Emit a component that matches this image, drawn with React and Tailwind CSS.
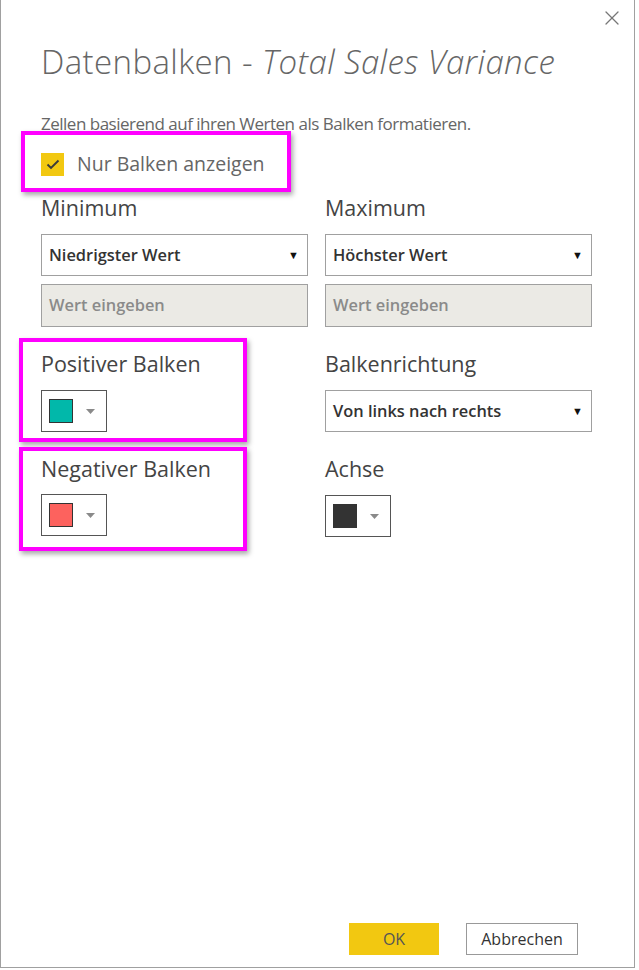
import { X } from 'lucide-react';

const font = { fontFamily: '"Open Sans", "Noto Sans", sans-serif' };

function Label({ children }) {
  return <div className="h-[26px] text-[21.5px] leading-[26px] text-[#444]">{children}</div>;
}

function Select({ value }) {
  return (
    <div className="h-[42px] border border-[#a0a0a0] bg-white flex items-center justify-between pl-[7px] pr-[8px]">
      <span className="text-[16.4px] font-semibold text-[#333]">{value}</span>
      <span className="text-[11px] text-[#111]">▼</span>
    </div>
  );
}

function ValueInput() {
  return (
    <div className="h-[43px] border border-[#a0a0a0] bg-[#ebeae5] flex items-center pl-[7px]">
      <span className="text-[16.4px] font-semibold text-[#8a8a8a]">Wert eingeben</span>
    </div>
  );
}

function Swatch({ color }) {
  return (
    <div className="w-[66px] h-[42px] border border-[#555] bg-white flex items-center pl-[7px] gap-[13px]">
      <div className={`w-[24px] h-[24px] border border-[#333] ${color}`} />
      <svg width="9" height="5" viewBox="0 0 9 5"><path d="M0 0h9L4.5 5z" fill="#8a8a8a" /></svg>
    </div>
  );
}

function Highlight({ className }) {
  return (
    <div
      className={`absolute border-[4px] border-[#ff00ff] pointer-events-none shadow-[2px_3px_5px_rgba(0,0,0,0.35)] ${className}`}
    />
  );
}

export default function App() {
  return (
    <div style={font} className="relative w-[635px] h-[968px] bg-white border-l border-r border-b border-[#a0a0a0] flex flex-col">
      <button type="button" className="absolute top-[6px] right-[10px] text-[#777]" aria-label="Close">
        <X size={24} strokeWidth={1.3} />
      </button>

      <div className="pl-[40px] pt-[40px]">
        <h1 className="text-[33px] leading-[44px] font-light text-[#666] tracking-[0.4px] whitespace-nowrap">
          Datenbalken - <span className="italic">Total Sales Variance</span>
        </h1>
        <p className="mt-[28px] text-[17px] leading-[24px] text-[#666] tracking-[-0.5px]">
          Zellen basierend auf ihren Werten als Balken formatieren.
        </p>

        <div className="relative mt-[16px] flex items-center gap-[13px] h-[24px]">
          <Highlight className="-left-[20px] -top-[21px] w-[270px] h-[61px]" />
          <div className="w-[23px] h-[23px] bg-[#f2c811] flex items-center justify-center">
            <svg width="14" height="11" viewBox="0 0 14 11">
              <path d="M1.5 5.5l3.5 3.5 7.5-7.5" fill="none" stroke="#3a3a3a" strokeWidth="1.9" />
            </svg>
          </div>
          <span className="text-[19.5px] text-[#666]">Nur Balken anzeigen</span>
        </div>

        <div className="grid grid-cols-[267px_267px] gap-x-[17px] mt-[19px]">
          <div>
            <Label>Minimum</Label>
            <div className="mt-[13px]"><Select value="Niedrigster Wert" /></div>
            <div className="mt-[8px]"><ValueInput /></div>
          </div>
          <div>
            <Label>Maximum</Label>
            <div className="mt-[13px]"><Select value="Höchster Wert" /></div>
            <div className="mt-[8px]"><ValueInput /></div>
          </div>

          <div className="relative mt-[24px]">
            <Highlight className="-left-[22px] -top-[13px] w-[228px] h-[104px]" />
            <Label>Positiver Balken</Label>
            <div className="mt-[13px]"><Swatch color="bg-[#01b8aa]" /></div>
          </div>
          <div className="mt-[24px]">
            <Label>Balkenrichtung</Label>
            <div className="mt-[13px]"><Select value="Von links nach rechts" /></div>
          </div>

          <div className="relative mt-[24px]">
            <Highlight className="-left-[22px] -top-[9px] w-[228px] h-[104px]" />
            <Label>Negativer Balken</Label>
            <div className="mt-[12px]"><Swatch color="bg-[#fd625e]" /></div>
          </div>
          <div className="mt-[24px]">
            <Label>Achse</Label>
            <div className="mt-[13px]"><Swatch color="bg-[#333333]" /></div>
          </div>
        </div>
      </div>

      <div className="mt-auto flex justify-end gap-[27px] pr-[56px] pb-[12px]">
        <button type="button" className="w-[90px] h-[32px] bg-[#f2c811] text-[16px] text-[#555]">
          OK
        </button>
        <button type="button" className="w-[112px] h-[32px] border border-[#999] bg-white text-[16px] text-[#333]">
          Abbrechen
        </button>
      </div>
    </div>
  );
}
